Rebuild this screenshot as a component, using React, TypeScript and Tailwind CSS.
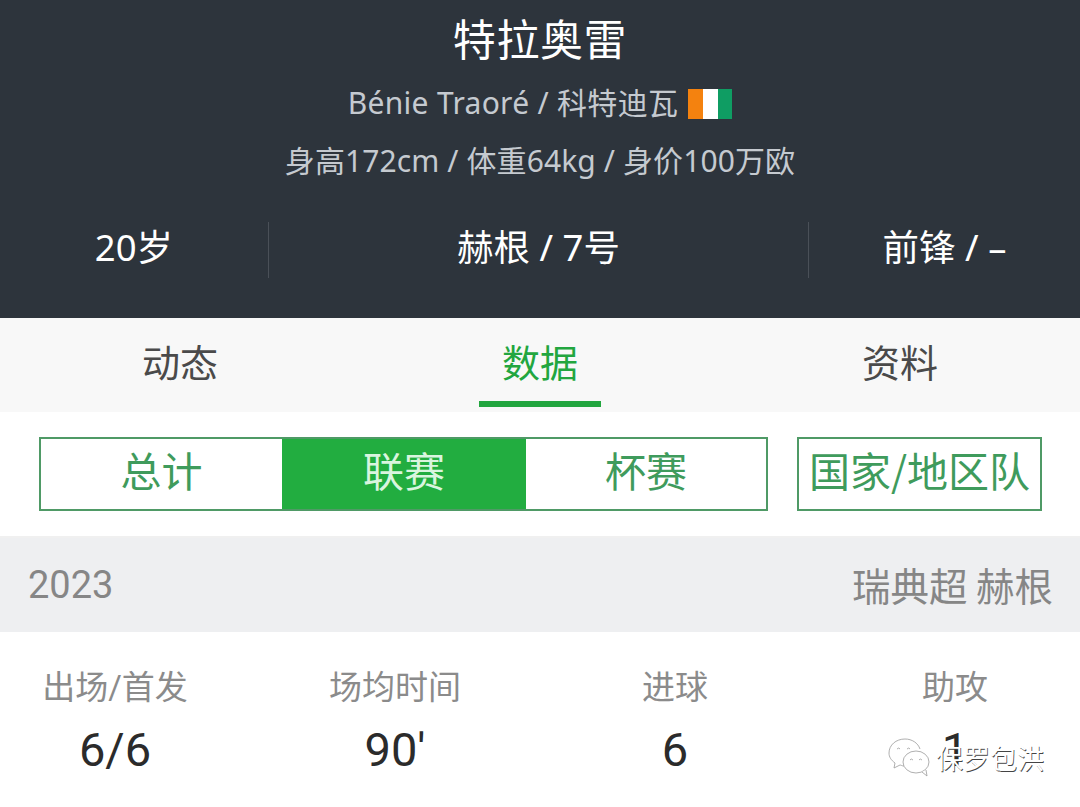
function Stat({ label, value }: { label: string; value: string }) {
  return (
    <div className="flex flex-col items-center">
      <div className="mt-[34px] text-[33px] leading-[44px] text-[#8b8b8b]">{label}</div>
      <div className="mt-[17px] text-[47px] leading-[46px] text-[#2b2b2b]">{value}</div>
    </div>
  );
}

function Wechat() {
  return (
    <div className="absolute left-[886px] top-[736px] flex items-center gap-[6px] text-white [text-shadow:0.7px_0.7px_0.4px_#444]">
      <svg width="44" height="44" viewBox="0 0 44 44" fill="none" stroke="#9a9a9a" strokeWidth="0.8">
        <path d="M19 3C10 3 3 9 3 17c0 4 2 7 6 10l-1 5 6-3c1 0 2 1 4 1" fill="#ffffff" />
        <path d="M19 3c7 0 13 4 15 10" />
        <ellipse cx="30" cy="26" rx="13" ry="11" fill="#ffffff" />
        <path d="M36 36l5 4-1-6" fill="#ffffff" />
        <path d="M11 13q2-2 3 0M21 13q2-2 3 0M24 24q1-2 3 0M33 24q1-2 3 0" />
      </svg>
      <span className="text-[27px] leading-[36px]">保罗包洪</span>
    </div>
  );
}

export default function App() {
  return (
    <div className="relative h-[807px] w-[1080px] overflow-hidden bg-white font-['Noto_Sans_CJK_SC',sans-serif]">
      <header className="flex h-[318px] flex-col items-center bg-[#2d343c] font-['Noto_Sans','Noto_Sans_CJK_SC',sans-serif]">
        <h1 className="mt-[12px] text-[43px] leading-[56px] tracking-[0.6px] text-white">特拉奥雷</h1>
        <div className="mt-[15px] flex items-center text-[30px] leading-[40px] tracking-[0.3px] text-[#c5cad0]">
          <span>Bénie Traoré / 科特迪瓦</span>
          <span className="ml-[10px] mt-[1px] flex h-[30px] w-[44px] shrink-0">
            <span className="flex-1 bg-[#f4820f]" />
            <span className="flex-1 bg-white" />
            <span className="flex-1 bg-[#0f9d63]" />
          </span>
        </div>
        <div className="mt-[18px] text-[30px] leading-[40px] tracking-[0.1px] text-[#c5cad0]">身高172cm / 体重64kg / 身价100万欧</div>
        <div className="mt-[41px] flex h-[56px] w-full items-stretch text-[36.5px] leading-[50px] text-white">
          <div className="w-[268px] text-center">20岁</div>
          <div className="w-[541px] border-x border-[#4a5058] text-center">赫根 / 7号</div>
          <div className="flex-1 text-center">前锋 / –</div>
        </div>
      </header>

      <nav className="grid h-[94px] grid-cols-3 bg-[#f8f8f8] text-[38px]">
        <div className="flex justify-center pt-[18px] leading-[50px] text-[#4a4a4a]">动态</div>
        <div className="relative flex justify-center pt-[18px] leading-[50px] text-[#22a63f]">
          数据
          <span className="absolute left-[119px] top-[83px] h-[6px] w-[122px] bg-[#22a63f]" />
        </div>
        <div className="flex justify-center pt-[18px] leading-[50px] text-[#4a4a4a]">资料</div>
      </nav>

      <section className="flex h-[126px] items-start gap-[29px] border-b-2 border-[#f0f0f0] pl-[39px] pt-[25px] text-[41px] leading-[60px]">
        <div className="flex h-[74px] w-[729px] border-2 border-[#4f9a66]">
          <div className="flex w-[241px] justify-center text-[#3f9b5c]">总计</div>
          <div className="flex w-[244px] justify-center bg-[#22ad40] text-[#d9f5df]">联赛</div>
          <div className="flex flex-1 justify-center text-[#3f9b5c]">杯赛</div>
        </div>
        <div className="flex h-[74px] w-[245px] justify-center whitespace-nowrap border-2 border-[#4f9a66] text-[#3f9b5c]">国家/地区队</div>
      </section>

      <section className="flex h-[94px] items-center justify-between bg-[#eeeff1] pl-[28px] pr-[27px] text-[38.5px] text-[#868686]">
        <span className="font-['Roboto',sans-serif] text-[38px]">2023</span>
        <span>瑞典超 赫根</span>
      </section>

      <section className="-ml-[25px] grid h-[175px] w-[1120px] grid-cols-4 font-['Roboto','Noto_Sans_CJK_SC',sans-serif]">
        <Stat label="出场/首发" value="6/6" />
        <Stat label="场均时间" value="90'" />
        <Stat label="进球" value="6" />
        <Stat label="助攻" value="1" />
      </section>

      <Wechat />
    </div>
  );
}
